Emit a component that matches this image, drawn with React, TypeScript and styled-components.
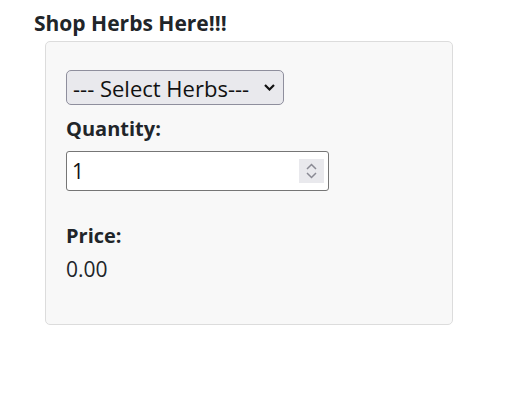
import React, { useState } from "react";
import styled, { createGlobalStyle } from "styled-components";

const Global = createGlobalStyle`
  body {
    margin: 0;
    background: #ffffff;
    font-family: "Open Sans", "Noto Sans", sans-serif;
    color: #212529;
  }
`;

const Page = styled.div`
  padding: 8px 0 0 34px;
`;

const Title = styled.h2`
  margin: 0 0 3px 0;
  font-size: 21px;
  line-height: 30px;
  font-weight: 700;
  color: #212529;
`;

const Card = styled.div`
  margin-left: 11px;
  width: 408px;
  box-sizing: border-box;
  height: 284px;
  background: #f8f8f8;
  border: 1px solid #dcdcdc;
  border-radius: 5px;
  padding: 28px 20px 20px 20px;
  display: flex;
  flex-direction: column;
  align-items: flex-start;
`;

const SelectWrap = styled.div`
  position: relative;
  display: inline-flex;
`;

const Select = styled.select`
  appearance: none;
  width: 218px;
  height: 35px;
  box-sizing: border-box;
  font-family: "Open Sans", "Noto Sans", sans-serif;
  font-size: 22px;
  color: #111;
  background: #e9e9ed;
  border: 1px solid #8f8f9d;
  border-radius: 5px;
  padding: 0 30px 0 6px;
`;

const Chevron = styled.svg`
  position: absolute;
  right: 9px;
  top: 14px;
  pointer-events: none;
`;

const Label = styled.div<{ $top: number }>`
  font-weight: 700;
  font-size: 20px;
  line-height: 26px;
  margin-top: ${(p) => p.$top}px;
`;

const InputWrap = styled.div`
  position: relative;
  margin-top: 9px;
`;

const Input = styled.input`
  width: 263px;
  height: 40px;
  box-sizing: border-box;
  border: 1px solid #767676;
  border-radius: 3px;
  background: #fff;
  font-family: "Open Sans", "Noto Sans", sans-serif;
  font-size: 21px;
  color: #111;
  padding: 0 5px;
  &::-webkit-inner-spin-button,
  &::-webkit-outer-spin-button {
    -webkit-appearance: none;
    margin: 0;
  }
`;

const Spinner = styled.div`
  position: absolute;
  right: 5px;
  top: 8px;
  width: 25px;
  height: 24px;
  background: #e9e9ed;
  display: flex;
  align-items: center;
  justify-content: center;
`;

const Value = styled.div`
  font-size: 21px;
  line-height: 28px;
  margin-top: 6px;
`;

export default function App() {
  const [qty, setQty] = useState("1");
  return (
    <>
      <Global />
      <Page>
        <Title>Shop Herbs Here!!!</Title>
        <Card>
          <SelectWrap>
            <Select defaultValue="">
              <option value="">--- Select Herbs---</option>
            </Select>
            <Chevron width="11" height="7" viewBox="0 0 11 7">
              <path d="M1 1 L5.5 5.5 L10 1" fill="none" stroke="#111" strokeWidth="2.2" />
            </Chevron>
          </SelectWrap>
          <Label $top={11}>Quantity:</Label>
          <InputWrap>
            <Input type="number" value={qty} onChange={(e) => setQty(e.target.value)} />
            <Spinner>
              <svg width="13" height="20" viewBox="0 0 13 20">
                <path d="M2 8 L6.5 3.5 L11 8" fill="none" stroke="#8a8a94" strokeWidth="1.5" />
                <path d="M2 12 L6.5 16.5 L11 12" fill="none" stroke="#8a8a94" strokeWidth="1.5" />
              </svg>
            </Spinner>
          </InputWrap>
          <Label $top={32}>Price:</Label>
          <Value>0.00</Value>
        </Card>
      </Page>
    </>
  );
}
